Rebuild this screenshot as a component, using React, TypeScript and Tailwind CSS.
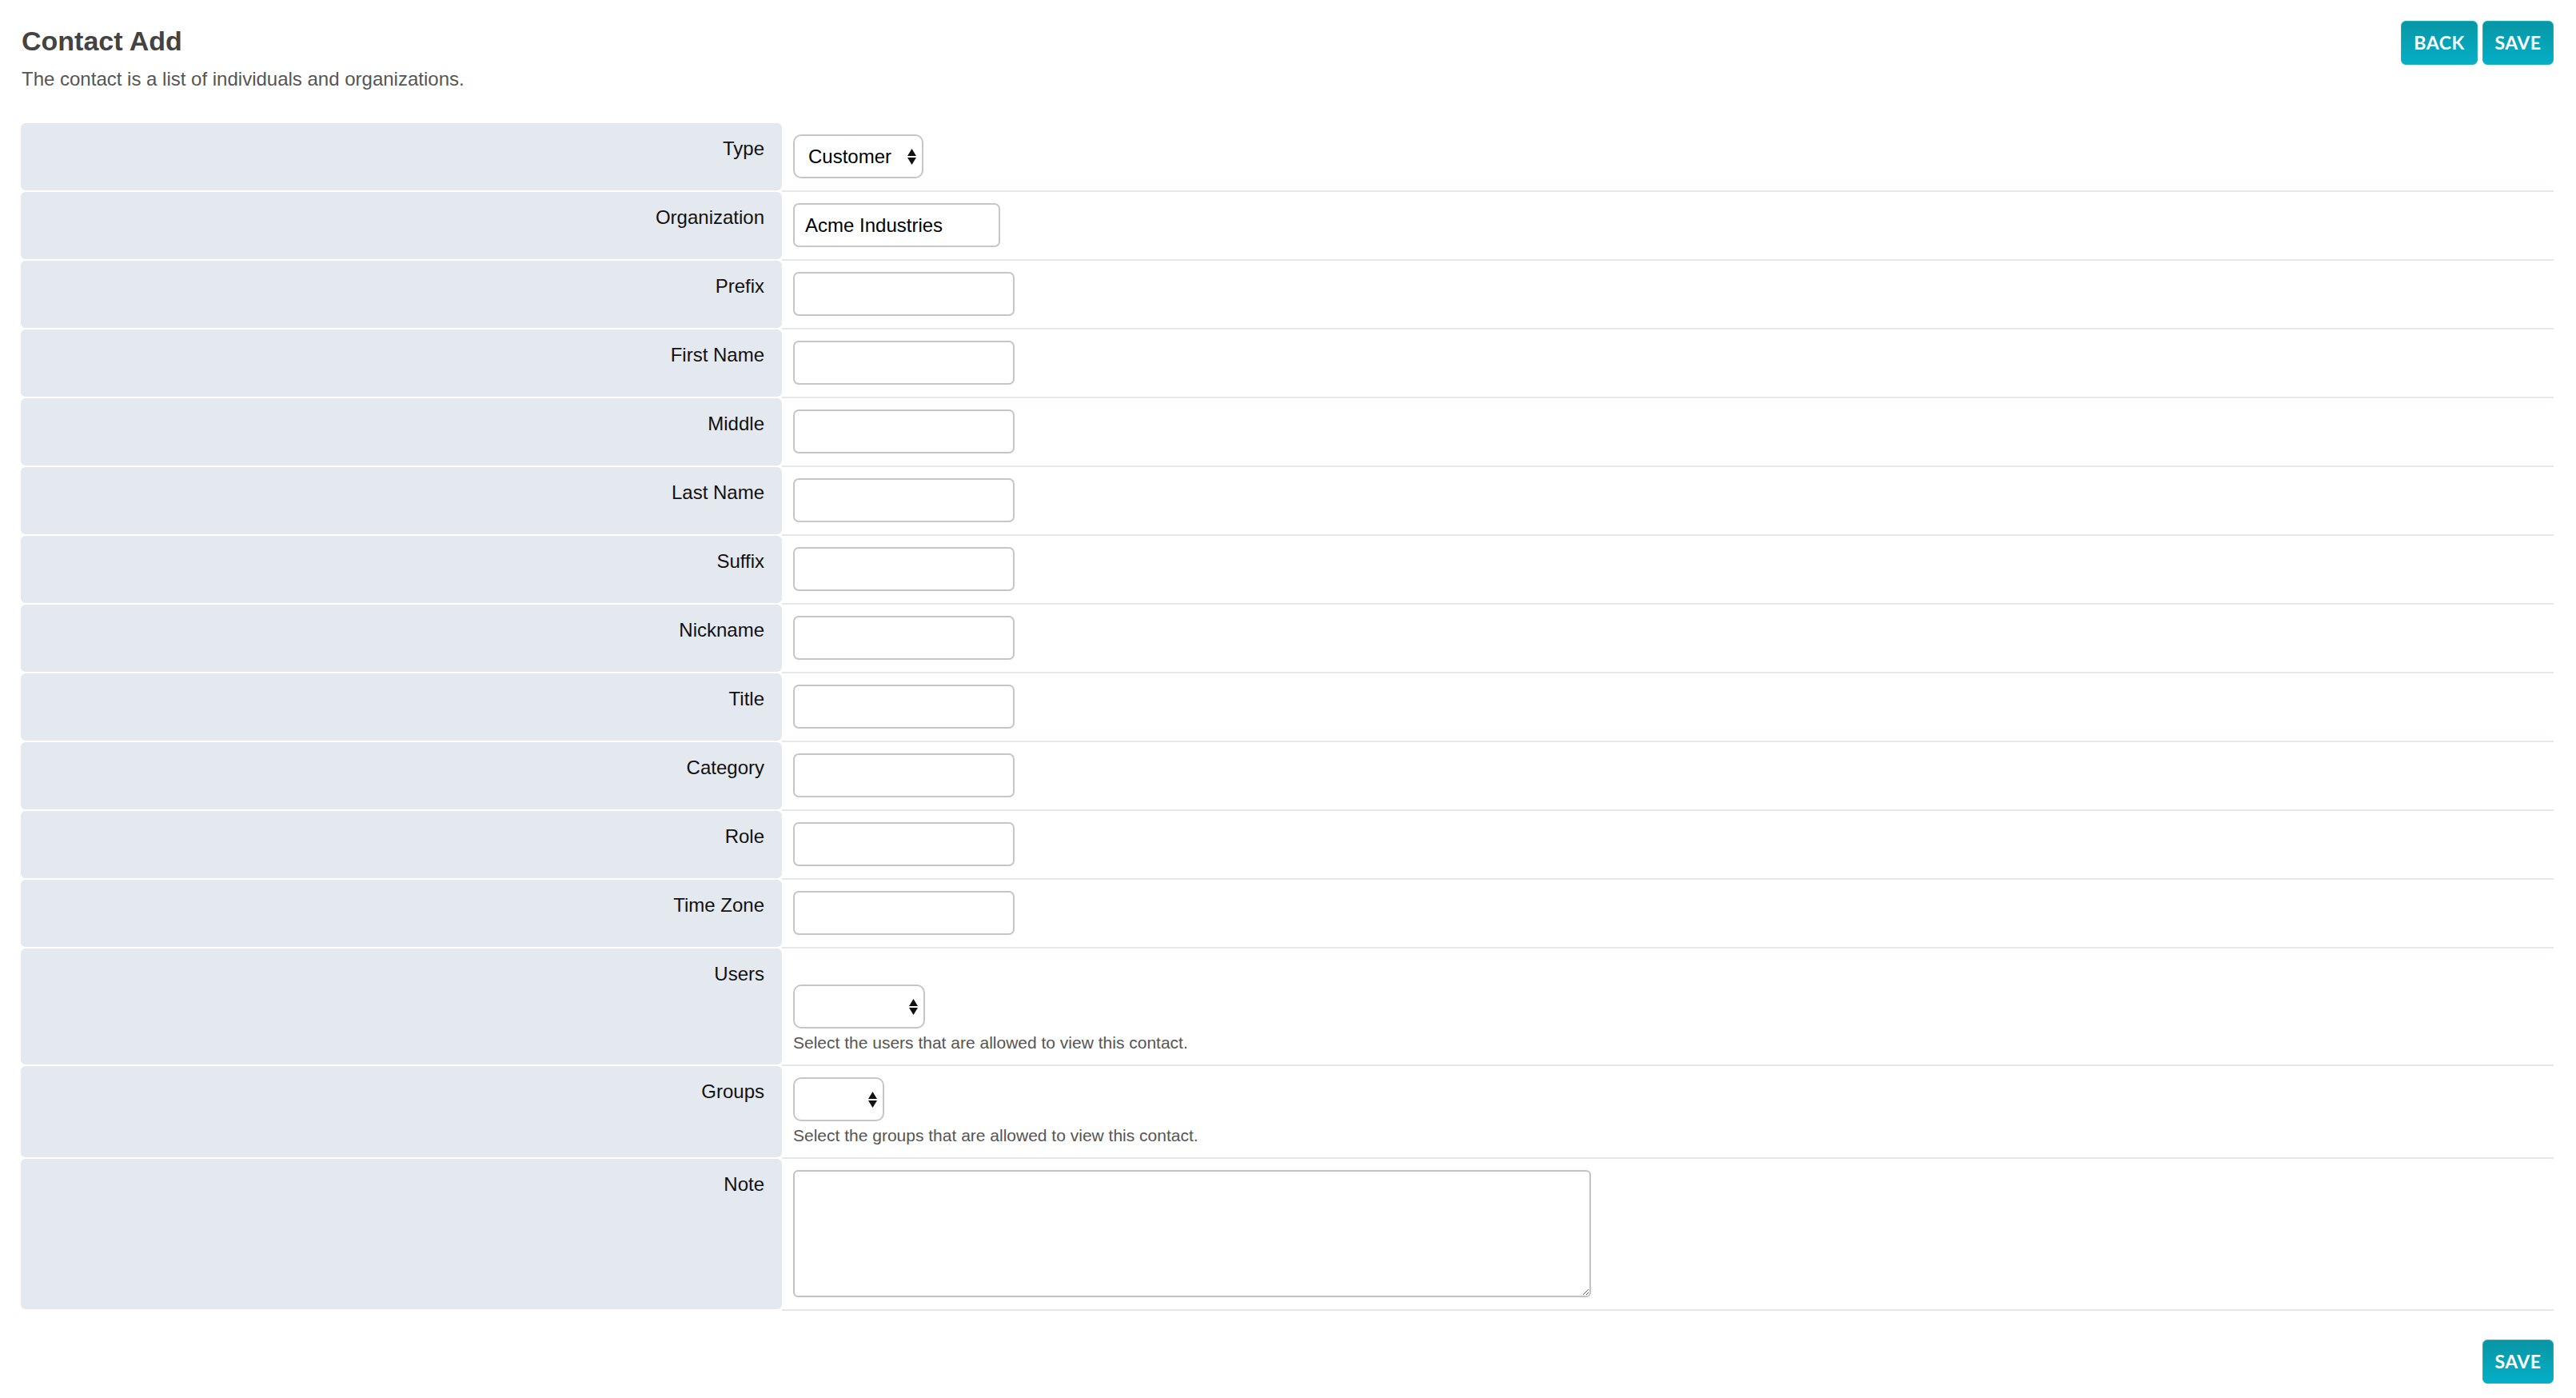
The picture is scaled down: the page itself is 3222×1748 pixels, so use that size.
import React from "react";

type Field = {
  label: string;
  kind: "select" | "input" | "multi" | "textarea";
  value?: string;
  width?: string;
  help?: string;
  spacer?: boolean;
};

const fields: Field[] = [
  { label: "Type", kind: "select", value: "Customer", width: "w-[163px]" },
  { label: "Organization", kind: "input", value: "Acme Industries", width: "w-[259px]" },
  { label: "Prefix", kind: "input" },
  { label: "First Name", kind: "input" },
  { label: "Middle", kind: "input" },
  { label: "Last Name", kind: "input" },
  { label: "Suffix", kind: "input" },
  { label: "Nickname", kind: "input" },
  { label: "Title", kind: "input" },
  { label: "Category", kind: "input" },
  { label: "Role", kind: "input" },
  { label: "Time Zone", kind: "input" },
  {
    label: "Users",
    kind: "multi",
    width: "w-[165px]",
    spacer: true,
    help: "Select the users that are allowed to view this contact.",
  },
  {
    label: "Groups",
    kind: "multi",
    width: "w-[114px]",
    help: "Select the groups that are allowed to view this contact.",
  },
  { label: "Note", kind: "textarea" },
];

const Arrows = () => (
  <svg
    width="11"
    height="20"
    viewBox="0 0 11 20"
    className="pointer-events-none absolute right-[9px] top-1/2 -translate-y-1/2"
  >
    <polygon points="0,9 5.5,0 11,9" fill="#111" />
    <polygon points="0,11 11,11 5.5,20" fill="#111" />
  </svg>
);

const SelectBox = ({ value, width }: { value?: string; width: string }) => (
  <div className={`relative ${width} h-[55px]`}>
    <select
      defaultValue={value ?? ""}
      className="appearance-none w-full h-full rounded-[10px] border-2 border-[#c6c6c6] bg-white pl-[17px] pr-[28px] text-[24px] text-black outline-none"
    >
      {value ? <option>{value}</option> : <option value=""></option>}
    </select>
    <Arrows />
  </div>
);

const ActionButton = ({ label, width }: { label: string; width: string }) => (
  <button
    className={`${width} h-[55px] rounded-[6px] border border-[#1fb0b9] bg-linear-to-b from-[#0896a5] to-[#04afc7] font-['Lato',sans-serif] text-[23px] font-bold tracking-[0.5px] text-white`}
  >
    {label}
  </button>
);

const FieldRow = ({ field }: { field: Field }) => {
  let control: React.ReactNode = null;

  if (field.kind === "select") {
    control = <SelectBox value={field.value} width={field.width ?? "w-[163px]"} />;
  } else if (field.kind === "multi") {
    control = (
      <>
        {field.spacer && <div className="h-[31px]" />}
        <SelectBox width={field.width ?? "w-[165px]"} />
        <p className="mt-[6px] text-[21px] leading-[24px] text-[#555]">{field.help}</p>
      </>
    );
  } else if (field.kind === "textarea") {
    control = (
      <textarea className="block w-[998px] h-[159px] rounded-[6px] border-2 border-[#c2c2c2] bg-white p-[8px] text-[24px] outline-none" />
    );
  } else {
    control = (
      <input
        type="text"
        defaultValue={field.value ?? ""}
        className={`${field.width ?? "w-[277px]"} h-[55px] rounded-[7px] border-2 border-[#c6c6c6] bg-white pl-[13px] text-[24px] text-black outline-none`}
      />
    );
  }

  return (
    <div className="flex">
      {/* Label cell */}
      <div className="w-[952px] shrink-0 mb-[2px] rounded-[6px] bg-[#e4e8ef] pt-[18px] pr-[22px] text-right text-[24px] leading-[28px] text-[#111]">
        {field.label}
      </div>
      {/* Control cell */}
      <div className="flex-1 border-b-2 border-[#e4e8ee] pl-[14px] pt-[14px] pb-[15px]">
        {control}
      </div>
    </div>
  );
};

export default function App() {
  return (
    <div className="min-h-screen bg-white pl-[26px] pr-[28px] pt-[26px] pb-[18px] font-['Liberation_Sans',Arial,sans-serif]">
      {/* Header */}
      <div className="flex items-start justify-between">
        <div className="pl-[1px]">
          <h1 className="mt-[5px] text-[34px] leading-[40px] font-bold text-[#434343]">Contact Add</h1>
          <p className="mt-[14px] text-[24px] leading-[28px] text-[#555]">
            The contact is a list of individuals and organizations.
          </p>
        </div>
        <div className="flex gap-[6px]">
          <ActionButton label="BACK" width="w-[96px]" />
          <ActionButton label="SAVE" width="w-[89px]" />
        </div>
      </div>

      {/* Form */}
      <div className="mt-[41px]">
        {fields.map((f) => (
          <FieldRow key={f.label} field={f} />
        ))}
      </div>

      {/* Footer */}
      <div className="mt-[36px] flex justify-end">
        <ActionButton label="SAVE" width="w-[89px]" />
      </div>
    </div>
  );
}
